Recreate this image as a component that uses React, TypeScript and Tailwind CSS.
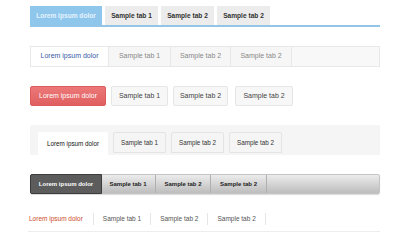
import React from "react";

const tabs = ["Sample tab 1", "Sample tab 2", "Sample tab 2"];

export default function App() {
  return (
    <div className="w-[400px] h-[240px] bg-white overflow-hidden pl-[30px] pr-[20px] font-['Liberation_Sans',Arial,sans-serif]">
      {/* Row 1: flat blue */}
      <div className="pt-[6px]">
        <div className="flex gap-[2px] h-[19px]">
          <div className="w-[72px] flex items-center justify-center bg-[#8fc6ec] text-[#e6f3fd] text-[6.6px] font-bold">
            Lorem ipsum dolor
          </div>
          {tabs.map((t, i) => (
            <div
              key={i}
              className="w-[53px] ml-[1px] flex items-center justify-center bg-[#ececec] text-[#333] text-[6.6px] font-bold"
            >
              {t}
            </div>
          ))}
        </div>
        <div className="h-[2px] bg-[#92c5e6]" />
      </div>

      {/* Row 2: bordered box */}
      <div className="mt-[19px] flex h-[21px] border border-[#e8e8e8] bg-[#f8f8f8]">
        <div className="w-[78px] flex items-center justify-center bg-white text-[#3a5aa5] text-[7px] border-r border-[#e8e8e8]">
          Lorem ipsum dolor
        </div>
        <div className="w-[62px] flex items-center justify-center bg-[#f6f6f6] text-[#888] text-[7px] border-r border-[#e8e8e8]">
          Sample tab 1
        </div>
        <div className="w-[60px] flex items-center justify-center bg-[#f6f6f6] text-[#888] text-[7px] border-r border-[#e8e8e8]">
          Sample tab 2
        </div>
        <div className="w-[61px] flex items-center justify-center bg-[#f6f6f6] text-[#888] text-[7px] border-r border-[#e8e8e8]">
          Sample tab 2
        </div>
      </div>

      {/* Row 3: pills */}
      <div className="mt-[19px] flex h-[20px]">
        <div className="w-[76px] flex items-center justify-center rounded-[2px] bg-gradient-to-b from-[#ec7878] to-[#e05f5f] border border-[#dc5a5a] text-white text-[7px]">
          Lorem ipsum dolor
        </div>
        <div className="ml-[5px] w-[57px] flex items-center justify-center rounded-[2px] bg-[#f7f7f7] border border-[#e6e6e6] text-[#444] text-[7px]">
          Sample tab 1
        </div>
        <div className="ml-[5px] w-[55px] flex items-center justify-center rounded-[2px] bg-[#f7f7f7] border border-[#e6e6e6] text-[#444] text-[7px]">
          Sample tab 2
        </div>
        <div className="ml-[7px] w-[58px] flex items-center justify-center rounded-[2px] bg-[#f7f7f7] border border-[#e6e6e6] text-[#444] text-[7px]">
          Sample tab 2
        </div>
      </div>

      {/* Row 4: grey panel with cards */}
      <div className="mt-[19px] h-[30px] bg-[#f5f5f5] rounded-t-[2px] pt-[7px] pl-[8px] flex items-start">
        <div className="w-[70px] h-[23px] flex items-center justify-center bg-white rounded-t-[2px] text-[#111] text-[6.3px]">
          Lorem ipsum dolor
        </div>
        {tabs.map((t, i) => (
          <div
            key={i}
            className="ml-[5px] w-[53px] h-[21px] flex items-center justify-center bg-[#f5f5f5] border border-[#e4e4e4] rounded-t-[2px] text-[#333] text-[6.3px]"
          >
            {t}
          </div>
        ))}
      </div>

      {/* Row 5: dark gradient bar */}
      <div className="mt-[19px] flex h-[20px] rounded-[2px] bg-gradient-to-b from-[#ececec] to-[#bdbdbd] border border-[#c4c4c4] shadow-[0_1px_1px_rgba(0,0,0,0.15)]">
        <div className="w-[72px] flex items-center justify-center bg-[#5c5c5c] border border-[#3c3c3c] rounded-l-[2px] text-white text-[6px] font-bold -m-[1px]">
          Lorem ipsum dolor
        </div>
        <div className="w-[55px] flex items-center justify-center border-r border-[#b0b0b0] text-[#222] text-[6px] font-bold">
          Sample tab 1
        </div>
        <div className="w-[55px] flex items-center justify-center border-r border-[#b0b0b0] text-[#222] text-[6px] font-bold">
          Sample tab 2
        </div>
        <div className="w-[56px] flex items-center justify-center border-r border-[#b0b0b0] text-[#222] text-[6px] font-bold">
          Sample tab 2
        </div>
      </div>

      {/* Row 6: plain text links */}
      <div className="mt-[19px] -ml-[2px] pl-[1px] border-b border-[#eeeeee] pb-[6px] flex items-center">
        <div className="pr-[10px] border-r border-[#e6e6e6] h-[12px] flex items-center text-[#cc4a2a] text-[6.5px]">
          Lorem ipsum dolor
        </div>
        {tabs.map((t, i) => (
          <div
            key={i}
            className="px-[9px] border-r border-[#e6e6e6] h-[12px] flex items-center text-[#555] text-[6.5px]"
          >
            {t}
          </div>
        ))}
      </div>
    </div>
  );
}
